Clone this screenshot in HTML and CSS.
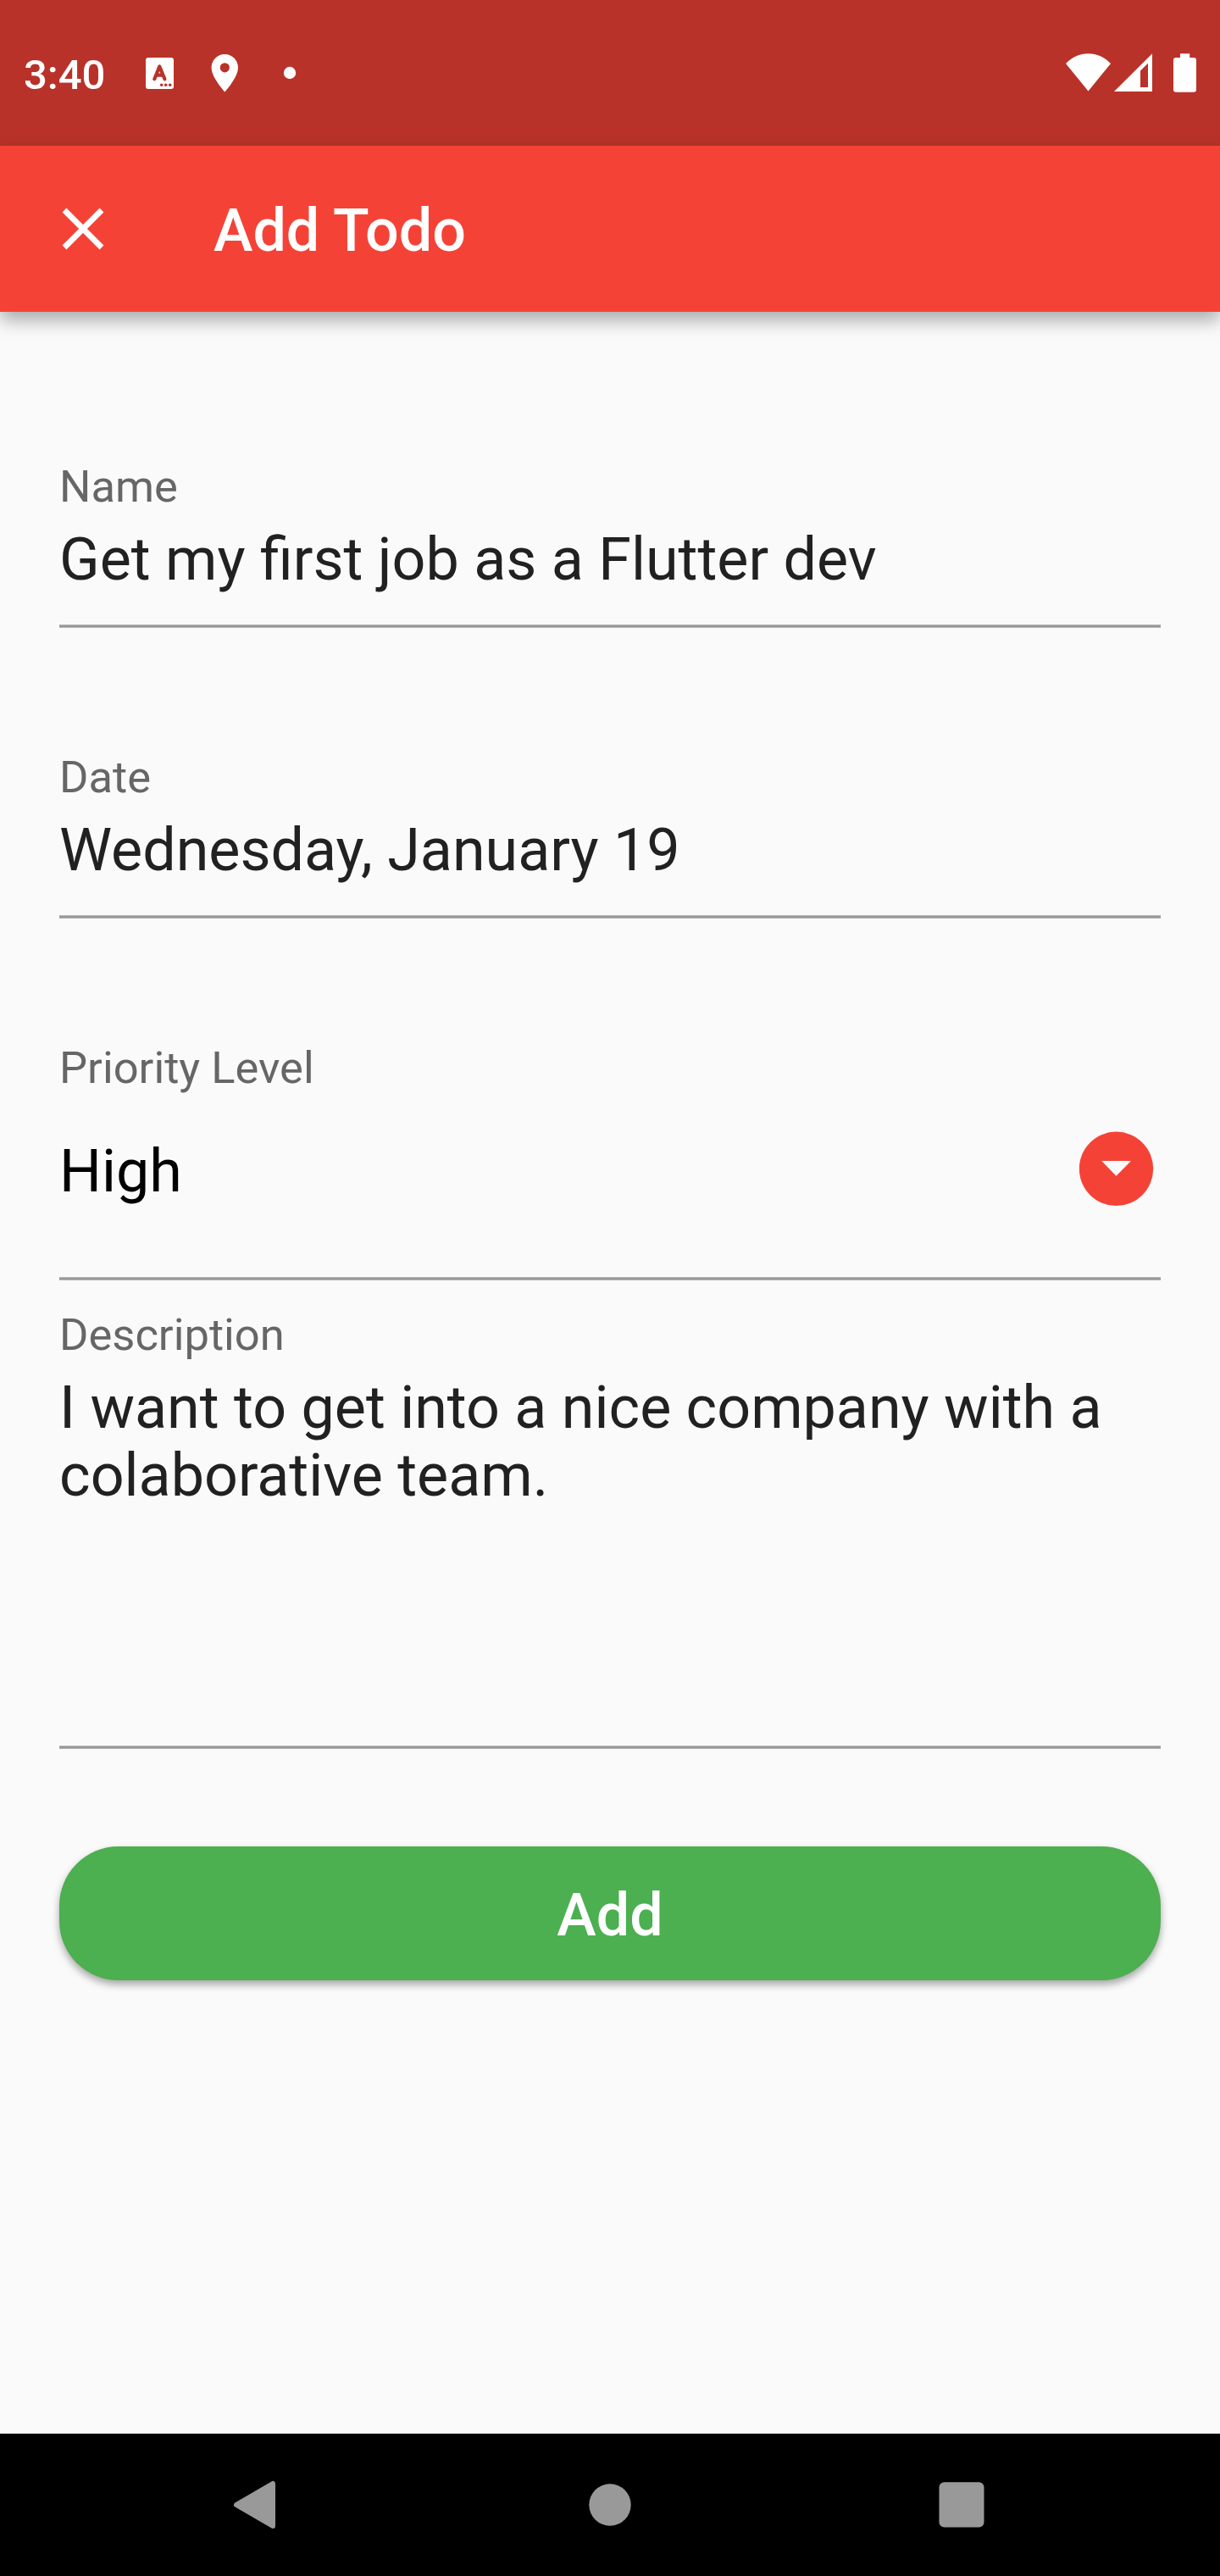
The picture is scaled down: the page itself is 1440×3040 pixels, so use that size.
FILE: index.html
```html
<!DOCTYPE html>
<html lang="en">
<head>
<meta charset="utf-8">
<title>Add Todo</title>
<link rel="stylesheet" href="styles.css">
</head>
<body>
<div class="screen">
  <div class="status-bar">
    <span class="clock">3:40</span>
    <svg class="status-left" width="180" height="50" viewBox="170 61 180 50" fill="#fff">
      <path d="M175 68h27a3 3 0 0 1 3 3v31a3 3 0 0 1-3 3h-27a3 3 0 0 1-3-3V71a3 3 0 0 1 3-3z"/>
      <path d="M182.300 93.200L188.300 78.500L194.400 93.200M184.500 88.600H192" fill="none" stroke="#b93229" stroke-width="4.200" stroke-linecap="round" stroke-linejoin="round"/>
      <g fill="#b93229"><circle cx="190.700" cy="100.300" r="1.800"/><circle cx="195.700" cy="100.300" r="1.800"/><circle cx="200.700" cy="100.300" r="1.800"/></g>
      <path fill-rule="evenodd" d="M265.300 64C256.500 64 249.600 71 249.600 79.700C249.600 91.500 265.300 108.500 265.300 108.500S281 91.500 281 79.700C281 71 274 64 265.300 64zM265.300 74.200a5.600 5.600 0 1 1 0 11.200a5.600 5.600 0 1 1 0-11.200z"/>
      <circle cx="342" cy="86" r="7.200"/>
    </svg>
    <svg class="status-right" width="160" height="50" viewBox="1255 61 160 50" fill="#fff">
      <path d="M1284.500 107.500L1258 75C1265 67.500 1274.500 63.200 1284.500 63.200S1304 67.500 1311 75z"/>
      <path fill-rule="evenodd" d="M1315 108L1360 63.300V108zM1346 83.500V103H1355V74.700z"/>
      <path d="M1393 63.200h11.200v4.800h4.800a3 3 0 0 1 3 3v34.800a3 3 0 0 1-3 3h-21a3 3 0 0 1-3-3V71a3 3 0 0 1 3-3h5z"/>
    </svg>
  </div>
  <header class="app-bar">
    <svg class="close" width="50" height="50" viewBox="73 245 50 50" stroke="#fff" stroke-width="6.900"><path d="M76 248L120 292M120 248L76 292"/></svg>
    <h1 class="title">Add Todo</h1>
  </header>
  <main class="form">
    <div class="field">
      <div class="label">Name</div>
      <div class="value">Get my first job as a Flutter dev</div>
    </div>
    <div class="field">
      <div class="label">Date</div>
      <div class="value">Wednesday, January 19</div>
    </div>
    <div class="field select">
      <div class="label">Priority Level</div>
      <div class="choice">
        <span class="selected">High</span>
        <svg width="88" height="88" viewBox="0 0 88 88"><circle cx="43.500" cy="44.300" r="43.700" fill="#f44336"/><path d="M26.200 35H61L43.500 52.700z" fill="#fafafa"/></svg>
      </div>
    </div>
    <div class="field description">
      <div class="label">Description</div>
      <div class="value">I want to get into a nice company with a<br>colaborative team.</div>
    </div>
    <button class="add" type="button">Add</button>
  </main>
  <nav class="nav-bar">
    <svg width="1440" height="168" viewBox="0 2872 1440 168" fill="#999">
      <path d="M322 2931V2981L279 2956z" stroke="#999" stroke-width="6" stroke-linejoin="round"/>
      <circle cx="720" cy="2956" r="24.700"/>
      <rect x="1108.500" y="2929.300" width="53" height="53.200" rx="6"/>
    </svg>
  </nav>
</div>
</body>
</html>
```
FILE: styles.css
```css
* {
  box-sizing: border-box;
}

body {
  margin: 0;
  font-family: Roboto, "Liberation Sans", sans-serif;
}

.screen {
  display: flex;
  flex-direction: column;
  width: 1440px;
  height: 3040px;
  background: #fafafa;
  overflow: hidden;
}

.status-bar {
  display: flex;
  align-items: flex-start;
  height: 172px;
  padding: 61px 25px 0 28px;
  background: #b93229;
  color: #fff;
}

.clock {
  width: 142px;
  margin-top: 1px;
  font-size: 49px;
  font-weight: 500;
  line-height: 53px;
}

.status-right {
  margin-left: auto;
}

.app-bar {
  display: flex;
  align-items: center;
  gap: 129px;
  height: 196px;
  padding-left: 73px;
  background: #f44336;
  box-shadow: 0 10px 20px rgba(0, 0, 0, 0.32);
  color: #fff;
}

.title {
  margin: 0;
  padding-top: 4px;
  font-size: 70px;
  font-weight: 500;
  line-height: 82px;
}

.form {
  flex: 1;
  padding: 175px 70px 0;
}

.field {
  height: 198px;
  margin-bottom: 145px;
  background: linear-gradient(#b4b4b4 0 1px, #999 1px 3px, #b4b4b4 3px) bottom / 100% 4px no-repeat;
  color: #212121;
}

.label {
  height: 62px;
  font-size: 52.5px;
  line-height: 62px;
  color: #666;
}

.value {
  margin-top: 15px;
  font-size: 70px;
  line-height: 80px;
  white-space: nowrap;
}

.select {
  height: 282px;
  margin-bottom: 33px;
}

.choice {
  display: flex;
  align-items: center;
  justify-content: space-between;
  height: 88px;
  margin-top: 44px;
  padding-right: 8px;
  color: #000;
}

.selected {
  padding-top: 6px;
  font-size: 70px;
  line-height: 82px;
}

.description {
  height: 520px;
  margin-bottom: 115px;
}

.add {
  display: block;
  width: 1300px;
  height: 158px;
  padding: 4px 0 0;
  border: 0;
  border-radius: 70px;
  background: #4caf50;
  box-shadow: 0 5px 10px rgba(0, 0, 0, 0.34);
  color: #fff;
  font-family: inherit;
  font-size: 70px;
  font-weight: 500;
  line-height: 82px;
}

.nav-bar {
  height: 168px;
  background: #000;
}

.nav-bar svg {
  display: block;
}
```
